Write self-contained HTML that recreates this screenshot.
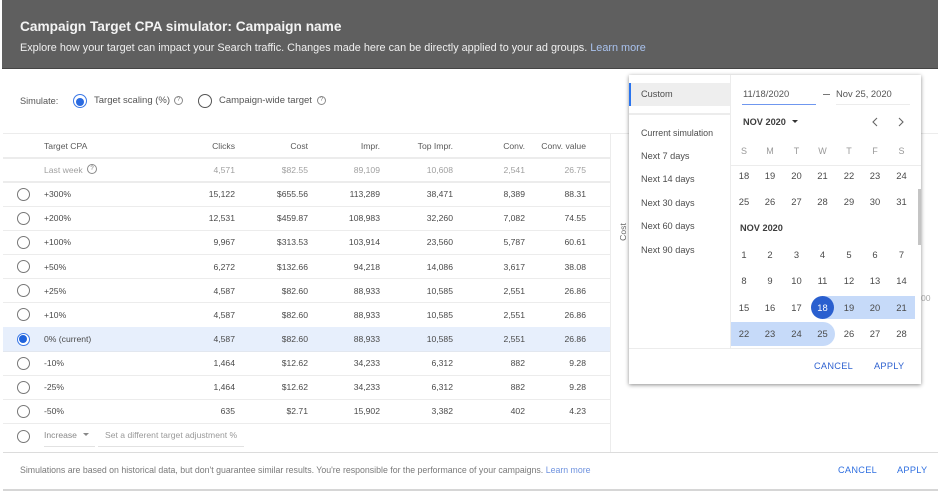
<!DOCTYPE html>
<html><head><meta charset="utf-8"><style>
html,body{margin:0;padding:0;background:#fff}
body{width:941px;height:495px;position:relative;overflow:hidden;font-family:"Liberation Sans",sans-serif;color:#444}
#w{position:absolute;left:0;top:0;width:941px;height:495px;filter:blur(.35px)}
.t,.r span,.c{position:absolute;white-space:nowrap}
.l{position:absolute;background:#ececec;height:1px}
.r{position:absolute;left:3px;width:607px;height:24px;font-size:8.6px;color:#4a4a4a}
.r span{top:0;line-height:24px}
.r .n{left:41px}.r .a{right:375px}.r .b{right:302px}.r .d{right:230px}.r .e{right:157px}.r .f{right:85px}.r .g{right:24px}
.o{position:absolute;left:16.5px;top:187px;width:11px;height:11px;border:1.3px solid #777;border-radius:50%;background:#fff}
.c{width:26px;text-align:center;font-size:9.4px;color:#4a4a4a;line-height:12px}
.m{position:absolute;left:641px;font-size:9.2px;color:#4d4d4d;line-height:12px;white-space:nowrap}
.q{position:absolute;width:7px;height:7px;border:1px solid #8a8a8a;border-radius:50%;font-size:6px;line-height:7px;text-align:center;color:#777}
</style></head><body><div id="w">
<div style="position:absolute;left:2px;top:0;width:936px;height:68px;background:#5f5f5f;border-bottom:1px solid #444"></div>
<div class="t" style="left:20px;top:18px;font-size:13.7px;line-height:18px;color:#fff;font-weight:bold;opacity:.93">Campaign Target CPA simulator: Campaign name</div>
<div class="t" style="left:20px;top:41px;font-size:10.86px;line-height:14px;color:#f0f0f0">Explore how your target can impact your Search traffic. Changes made here can be directly applied to your ad groups. <span style="color:#a9c2ee">Learn more</span></div>

<div class="t" style="left:20px;top:95px;font-size:9.2px;line-height:12px;color:#555">Simulate:</div>
<div style="position:absolute;left:72.5px;top:94px;width:12px;height:12px;border:1.5px solid #3b78e7;border-radius:50%"></div>
<div style="position:absolute;left:76px;top:97.5px;width:8px;height:8px;background:#2a6ae0;border-radius:50%"></div>
<div class="t" style="left:94px;top:95px;font-size:9.5px;line-height:12px;color:#555">Target scaling (%)</div>
<div class="q" style="left:174px;top:96px">?</div>
<div style="position:absolute;left:197.5px;top:94px;width:12px;height:12px;border:1.4px solid #555;border-radius:50%"></div>
<div class="t" style="left:219px;top:95px;font-size:9.5px;line-height:12px;color:#555">Campaign-wide target</div>
<div class="q" style="left:317px;top:96px">?</div>

<div class="l" style="left:3px;top:133px;width:935px"></div>
<div class="l" style="left:3px;top:157px;width:607px;height:1.5px"></div>
<div class="l" style="left:3px;top:181px;width:607px;height:1.5px"></div>
<div class="l" style="left:3px;top:206px;width:607px"></div>
<div class="l" style="left:3px;top:230px;width:607px"></div>
<div class="l" style="left:3px;top:254px;width:607px"></div>
<div class="l" style="left:3px;top:278px;width:607px"></div>
<div class="l" style="left:3px;top:302px;width:607px"></div>
<div style="position:absolute;left:3px;top:327px;width:607px;height:24px;background:#e7effc"></div>
<div class="l" style="left:3px;top:351px;width:607px;background:#e2e7ef"></div>
<div class="l" style="left:3px;top:375px;width:607px"></div>
<div class="l" style="left:3px;top:399px;width:607px"></div>
<div class="l" style="left:3px;top:423px;width:607px"></div>
<div class="l" style="left:3px;top:452px;width:935px;background:#dcdcdc"></div>
<div class="l" style="left:610px;top:134px;width:1px;height:318px"></div>
<div style="position:absolute;left:3px;top:489px;width:935px;height:2px;background:#d6d6d6"></div>

<div class="r" style="top:134px;color:#5a5a5a"><span class="n">Target CPA</span><span class="a">Clicks</span><span class="b">Cost</span><span class="d">Impr.</span><span class="e">Top Impr.</span><span class="f">Conv.</span><span class="g">Conv. value</span></div>
<div class="r" style="top:158px;color:#a0a0a0"><span class="n">Last week</span><span class="a">4,571</span><span class="b">$82.55</span><span class="d">89,109</span><span class="e">10,608</span><span class="f">2,541</span><span class="g">26.75</span></div>
<div class="q" style="left:87px;top:164px;width:8px;height:8px;line-height:8px">?</div>
<div class="r" style="top:182px"><span class="n">+300%</span><span class="a">15,122</span><span class="b">$655.56</span><span class="d">113,289</span><span class="e">38,471</span><span class="f">8,389</span><span class="g">88.31</span></div>
<div class="r" style="top:206px"><span class="n">+200%</span><span class="a">12,531</span><span class="b">$459.87</span><span class="d">108,983</span><span class="e">32,260</span><span class="f">7,082</span><span class="g">74.55</span></div>
<div class="r" style="top:230px"><span class="n">+100%</span><span class="a">9,967</span><span class="b">$313.53</span><span class="d">103,914</span><span class="e">23,560</span><span class="f">5,787</span><span class="g">60.61</span></div>
<div class="r" style="top:254.5px"><span class="n">+50%</span><span class="a">6,272</span><span class="b">$132.66</span><span class="d">94,218</span><span class="e">14,086</span><span class="f">3,617</span><span class="g">38.08</span></div>
<div class="r" style="top:278.5px"><span class="n">+25%</span><span class="a">4,587</span><span class="b">$82.60</span><span class="d">88,933</span><span class="e">10,585</span><span class="f">2,551</span><span class="g">26.86</span></div>
<div class="r" style="top:302.5px"><span class="n">+10%</span><span class="a">4,587</span><span class="b">$82.60</span><span class="d">88,933</span><span class="e">10,585</span><span class="f">2,551</span><span class="g">26.86</span></div>
<div class="r" style="top:327px"><span class="n">0% (current)</span><span class="a">4,587</span><span class="b">$82.60</span><span class="d">88,933</span><span class="e">10,585</span><span class="f">2,551</span><span class="g">26.86</span></div>
<div class="r" style="top:351px"><span class="n">-10%</span><span class="a">1,464</span><span class="b">$12.62</span><span class="d">34,233</span><span class="e">6,312</span><span class="f">882</span><span class="g">9.28</span></div>
<div class="r" style="top:375px"><span class="n">-25%</span><span class="a">1,464</span><span class="b">$12.62</span><span class="d">34,233</span><span class="e">6,312</span><span class="f">882</span><span class="g">9.28</span></div>
<div class="r" style="top:399px"><span class="n">-50%</span><span class="a">635</span><span class="b">$2.71</span><span class="d">15,902</span><span class="e">3,382</span><span class="f">402</span><span class="g">4.23</span></div>

<div class="o" style="top:187.5px"></div>
<div class="o" style="top:211.5px"></div>
<div class="o" style="top:235.5px"></div>
<div class="o" style="top:260px"></div>
<div class="o" style="top:284px"></div>
<div class="o" style="top:308px"></div>
<div class="o" style="top:332.5px;border-color:#3b78e7"></div>
<div style="position:absolute;left:19.3px;top:335.3px;width:8px;height:8px;border-radius:50%;background:#1f63dc"></div>
<div class="o" style="top:356.5px"></div>
<div class="o" style="top:380.5px"></div>
<div class="o" style="top:404.5px"></div>
<div class="o" style="top:430px"></div>

<div class="t" style="left:44px;top:429px;font-size:8.6px;line-height:12px;color:#888">Increase</div>
<div style="position:absolute;left:83px;top:433px;width:0;height:0;border:3.5px solid transparent;border-top:3.5px solid #888;border-bottom:0"></div>
<div class="l" style="left:44px;top:446px;width:51px;background:#e2e2e2"></div>
<div class="t" style="left:105px;top:429px;font-size:8.6px;line-height:12px;color:#999">Set a different target adjustment %</div>
<div class="l" style="left:98px;top:446px;width:146px;background:#e2e2e2"></div>

<div class="t" style="left:20px;top:465px;font-size:8.78px;line-height:11px;color:#7a7a7a">Simulations are based on historical data, but don't guarantee similar results. You're responsible for the performance of your campaigns. <span style="color:#6f93df">Learn more</span></div>
<div class="t" style="left:838px;top:464px;font-size:9.2px;line-height:12px;color:#2f6fe0;letter-spacing:.3px">CANCEL</div>
<div class="t" style="left:897px;top:464px;font-size:9.2px;line-height:12px;color:#2f6fe0;letter-spacing:.3px">APPLY</div>

<div class="t" style="left:614px;top:226px;font-size:8.6px;line-height:12px;color:#666;transform:rotate(-90deg)">Cost</div>
<div class="t" style="left:921px;top:293px;font-size:8.6px;line-height:11px;color:#aaa">00</div>

<!-- popup -->
<div style="position:absolute;left:629px;top:75px;width:292px;height:309px;background:#fff;box-shadow:0 1px 4px rgba(0,0,0,.45)"></div>
<div style="position:absolute;left:629px;top:83px;width:101px;height:23px;background:#eee"></div>
<div style="position:absolute;left:629px;top:83px;width:2px;height:23px;background:#2a74ee"></div>
<div class="l" style="left:629px;top:113px;width:101px;height:1.5px"></div>
<div class="l" style="left:730px;top:75px;width:1px;height:273px"></div>
<div class="m" style="top:88px">Custom</div>
<div class="m" style="top:127px;font-size:8.9px">Current simulation</div>
<div class="m" style="top:150px">Next 7 days</div>
<div class="m" style="top:173px">Next 14 days</div>
<div class="m" style="top:197px">Next 30 days</div>
<div class="m" style="top:220px">Next 60 days</div>
<div class="m" style="top:244px">Next 90 days</div>

<div class="t" style="left:743px;top:88px;font-size:9.4px;line-height:12px;color:#555">11/18/2020</div>
<div style="position:absolute;left:742px;top:103.5px;width:74px;height:1.5px;background:#6f97ef"></div>
<div style="position:absolute;left:823px;top:94px;width:7px;height:1px;background:#777"></div>
<div class="t" style="left:836px;top:88px;font-size:9.4px;line-height:12px;color:#555">Nov 25, 2020</div>
<div class="l" style="left:836px;top:104px;width:74px"></div>
<div class="t" style="left:743px;top:116px;font-size:9.2px;line-height:12px;color:#3d3d3d;font-weight:bold">NOV 2020</div>
<div style="position:absolute;left:792px;top:120px;width:0;height:0;border:3.5px solid transparent;border-top:3.5px solid #333;border-bottom:0"></div>
<svg style="position:absolute;left:868px;top:115px" width="40" height="14" fill="none" stroke="#666" stroke-width="1.1"><path d="M9 3L5 7l4 4"/><path d="M31 3l4 4-4 4"/></svg>

<div class="c" style="left:731px;top:145px;color:#999;font-size:9px">S</div><div class="c" style="left:757px;top:145px;color:#999;font-size:9px">M</div><div class="c" style="left:783.5px;top:145px;color:#999;font-size:9px">T</div><div class="c" style="left:809.5px;top:145px;color:#999;font-size:9px">W</div><div class="c" style="left:836px;top:145px;color:#999;font-size:9px">T</div><div class="c" style="left:862px;top:145px;color:#999;font-size:9px">F</div><div class="c" style="left:888.5px;top:145px;color:#999;font-size:9px">S</div>
<div class="l" style="left:731px;top:164.5px;width:190px;height:1.5px"></div>

<div class="c" style="left:731px;top:170px">18</div><div class="c" style="left:757px;top:170px">19</div><div class="c" style="left:783.5px;top:170px">20</div><div class="c" style="left:809.5px;top:170px">21</div><div class="c" style="left:836px;top:170px">22</div><div class="c" style="left:862px;top:170px">23</div><div class="c" style="left:888.5px;top:170px">24</div>
<div class="c" style="left:731px;top:196px">25</div><div class="c" style="left:757px;top:196px">26</div><div class="c" style="left:783.5px;top:196px">27</div><div class="c" style="left:809.5px;top:196px">28</div><div class="c" style="left:836px;top:196px">29</div><div class="c" style="left:862px;top:196px">30</div><div class="c" style="left:888.5px;top:196px">31</div>
<div class="t" style="left:740px;top:222px;font-size:9.2px;line-height:12px;color:#3d3d3d;font-weight:bold">NOV 2020</div>
<div class="c" style="left:731px;top:249px">1</div><div class="c" style="left:757px;top:249px">2</div><div class="c" style="left:783.5px;top:249px">3</div><div class="c" style="left:809.5px;top:249px">4</div><div class="c" style="left:836px;top:249px">5</div><div class="c" style="left:862px;top:249px">6</div><div class="c" style="left:888.5px;top:249px">7</div>
<div class="c" style="left:731px;top:275px">8</div><div class="c" style="left:757px;top:275px">9</div><div class="c" style="left:783.5px;top:275px">10</div><div class="c" style="left:809.5px;top:275px">11</div><div class="c" style="left:836px;top:275px">12</div><div class="c" style="left:862px;top:275px">13</div><div class="c" style="left:888.5px;top:275px">14</div>

<div style="position:absolute;left:822px;top:296px;width:93px;height:23px;background:#c6daf9"></div>
<div style="position:absolute;left:811px;top:296px;width:23px;height:23px;border-radius:50%;background:#2a5fcf"></div>
<div style="position:absolute;left:731px;top:322px;width:104px;height:23.5px;background:#c6daf9;border-radius:0 12px 12px 0"></div>
<div class="c" style="left:731px;top:301.5px">15</div><div class="c" style="left:757px;top:301.5px">16</div><div class="c" style="left:783.5px;top:301.5px">17</div><div class="c" style="left:809.5px;top:301.5px;color:#fff">18</div><div class="c" style="left:836px;top:301.5px">19</div><div class="c" style="left:862px;top:301.5px">20</div><div class="c" style="left:888.5px;top:301.5px">21</div>
<div class="c" style="left:731px;top:328px">22</div><div class="c" style="left:757px;top:328px">23</div><div class="c" style="left:783.5px;top:328px">24</div><div class="c" style="left:809.5px;top:328px">25</div><div class="c" style="left:836px;top:328px">26</div><div class="c" style="left:862px;top:328px">27</div><div class="c" style="left:888.5px;top:328px">28</div>

<div style="position:absolute;left:918px;top:189px;width:3px;height:56px;background:#c4c4c4"></div>
<div class="l" style="left:629px;top:348px;width:292px"></div>
<div class="t" style="left:814px;top:360px;font-size:9.2px;line-height:12px;color:#2f62d0;letter-spacing:.3px">CANCEL</div>
<div class="t" style="left:874px;top:360px;font-size:9.2px;line-height:12px;color:#2f62d0;letter-spacing:.3px">APPLY</div>
</div></body></html>
